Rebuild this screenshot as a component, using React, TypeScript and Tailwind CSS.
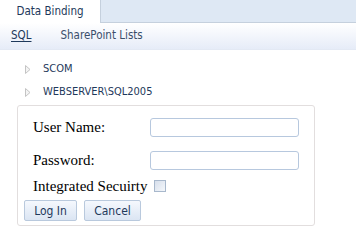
import React from 'react';

const Arrow: React.FC = () => (
    <svg width="6" height="9" viewBox="0 0 6 9" className="flex-shrink-0">
        <path d="M0.5 0.5 L5 4.5 L0.5 8.5 Z" fill="#f4f4f4" stroke="#c4c4c4" strokeWidth="1" />
    </svg>
);

const App: React.FC = () => {
    const sans = { fontFamily: '"DejaVu Sans Condensed", "DejaVu Sans", sans-serif', fontStretch: 'condensed' as const };

    return (
        <div className="w-[356px] h-[249px] bg-white overflow-hidden text-[#1e395b]" style={sans}>
            {/* Tabs */}
            <div className="flex h-[23px] bg-[#dee8f4] border-b border-[#c5d0dd]">
                <div className="w-[101px] h-[23px] bg-white border-r border-[#c5d0dd] flex items-center justify-center text-[11.5px] text-[#1e395b]">
                    Data Binding
                </div>
            </div>

            {/* Sub nav */}
            <div className="h-[27px] flex items-center gap-[29px] px-[11px] bg-gradient-to-b from-white to-[#e6ecf8] border-b border-[#e3e9f4] text-[11.5px]">
                <span className="underline underline-offset-2">SQL</span>
                <span className="text-[#3b4f6b]">SharePoint Lists</span>
            </div>

            {/* Tree */}
            <div className="pl-[25px] pt-[8px] text-[11px]">
                <div className="h-[23px] flex items-center gap-[12px]">
                    <Arrow />
                    <span>SCOM</span>
                </div>
                <div className="h-[23px] flex items-center gap-[12px]">
                    <Arrow />
                    <span>WEBSERVER\SQL2005</span>
                </div>
            </div>

            {/* Login form */}
            <div
                className="ml-[17px] mt-[1px] w-[298px] h-[121px] border border-[#e2dede] rounded-[3px] pl-[15px] pr-[15px] pt-[11px] text-black"
                style={{ fontFamily: '"Liberation Serif", serif' }}
            >
                <div className="flex items-center justify-between h-[20px]">
                    <span className="text-[15px]">User Name:</span>
                    <input className="w-[149px] h-[19px] border border-[#b7c8de] rounded-[3px] outline-none" />
                </div>
                <div className="flex items-center justify-between h-[20px] mt-[13px]">
                    <span className="text-[15px]">Password:</span>
                    <input type="password" className="w-[149px] h-[19px] border border-[#b7c8de] rounded-[3px] outline-none" />
                </div>
                <div className="flex items-center gap-[6px] h-[20px] mt-[6px]">
                    <span className="text-[15px]">Integrated Secuirty</span>
                    <span className="w-[12px] h-[12px] border border-[#a8b8cc] bg-gradient-to-br from-[#d7dfeb] to-[#f4f7fb]" />
                </div>
                <div className="flex gap-[7px] mt-[4px] -ml-[9px]" style={sans}>
                    <button className="w-[53px] h-[21px] border border-[#b9c9dd] rounded-[2px] bg-gradient-to-b from-[#f5f8fd] to-[#dbe5f3] text-[12px] text-[#1e395b]">
                        Log In
                    </button>
                    <button className="w-[57px] h-[21px] border border-[#b9c9dd] rounded-[2px] bg-gradient-to-b from-[#f5f8fd] to-[#dbe5f3] text-[12px] text-[#1e395b]">
                        Cancel
                    </button>
                </div>
            </div>
        </div>
    );
};

export default App;
